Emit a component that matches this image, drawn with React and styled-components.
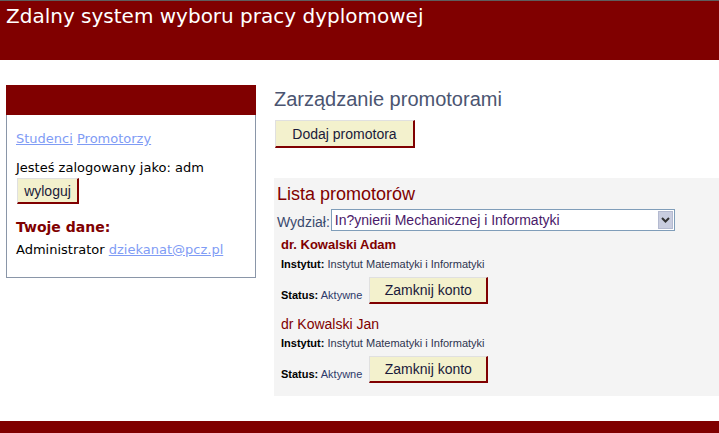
import React from "react";
import styled, { createGlobalStyle } from "styled-components";

const GlobalStyle = createGlobalStyle`
  body {
    margin: 0;
    background: #ffffff;
    font-family: "DejaVu Sans", Verdana, sans-serif;
  }
`;

const promotors = [
  { id: 1, name: "dr. Kowalski Adam", bold: true, institute: "Instytut Matematyki i Informatyki", status: "Aktywne" },
  { id: 2, name: "dr Kowalski Jan", bold: false, institute: "Instytut Matematyki i Informatyki", status: "Aktywne" },
];

const App = () => {
  return (
    <Page>
      <GlobalStyle />
      <Header>
        <SiteTitle>Zdalny system wyboru pracy dyplomowej</SiteTitle>
      </Header>
      <Content>
        <Sidebar>
          <SidebarBar />
          <SidebarBody>
            <NavLinks>
              <Link href="#">Studenci</Link> <Link href="#">Promotorzy</Link>
            </NavLinks>
            <LoggedAs>Jesteś zalogowany jako: adm</LoggedAs>
            <Button $small>wyloguj</Button>
            <DataTitle>Twoje dane:</DataTitle>
            <Admin>
              Administrator <Link href="#">dziekanat@pcz.pl</Link>
            </Admin>
          </SidebarBody>
        </Sidebar>
        <Main>
          <PageTitle>Zarządzanie promotorami</PageTitle>
          <Button $wide>Dodaj promotora</Button>
          <Panel>
            <ListTitle>Lista promotorów</ListTitle>
            <FilterRow>
              <FilterLabel>Wydział:</FilterLabel>
              <SelectBox>
                <SelectText>In?ynierii Mechanicznej i Informatyki</SelectText>
                <SelectArrow>
                  <svg width="9" height="6" viewBox="0 0 9 6">
                    <path d="M1 1 L4.5 4.5 L8 1" stroke="#333" strokeWidth="2" fill="none" />
                  </svg>
                </SelectArrow>
              </SelectBox>
            </FilterRow>
            {promotors.map((p) => (
              <Promotor key={p.id}>
                <PromotorName $bold={p.bold}>{p.name}</PromotorName>
                <InfoLine>
                  <b>Instytut:</b> {p.institute}
                </InfoLine>
                <StatusRow>
                  <InfoLine>
                    <b>Status:</b> <StatusValue>{p.status}</StatusValue>
                  </InfoLine>
                  <Button $medium>Zamknij konto</Button>
                </StatusRow>
              </Promotor>
            ))}
          </Panel>
        </Main>
      </Content>
      <Footer />
    </Page>
  );
};

const Page = styled.div`
  width: 100%;
`;
const Header = styled.div`
  height: 60px;
  background: #800000;
  border-top: 1px solid #5e5e5e;
  padding: 3px 0 0 6px;
  box-sizing: border-box;
`;
const SiteTitle = styled.h1`
  margin: 0;
  font-family: "DejaVu Sans", Verdana, sans-serif;
  font-weight: normal;
  font-size: 20px;
  color: #ffffff;
  line-height: 24px;
`;
const Content = styled.div`
  display: flex;
  align-items: flex-start;
  gap: 18px;
  padding: 25px 0 0 6px;
`;
const Sidebar = styled.div`
  width: 250px;
  box-sizing: border-box;
  border: 1px solid #8a96a8;
  border-top: none;
  background: #fff;
  flex-shrink: 0;
`;
const SidebarBar = styled.div`
  height: 30px;
  margin: 0 -1px;
  background: #800000;
`;
const SidebarBody = styled.div`
  padding: 16px 9px 19px 9px;
  font-size: 13px;
  color: #000;
`;
const NavLinks = styled.div`
  line-height: 16px;
`;
const Link = styled.a`
  color: #7f9cf5;
  text-decoration: underline;
`;
const LoggedAs = styled.div`
  margin-top: 13px;
  line-height: 16px;
`;
const DataTitle = styled.div`
  margin-top: 14px;
  font-size: 14px;
  font-weight: bold;
  color: #800000;
  line-height: 18px;
`;
const Admin = styled.div`
  margin-top: 6px;
  line-height: 16px;
`;
const Button = styled.button`
  display: block;
  box-sizing: border-box;
  background: #f3f1cd;
  border: 2px solid;
  border-color: #e0e0e0 #800000 #800000 #e0e0e0;
  border-width: 1px 2px 2px 1px;
  color: #1a1a3a;
  font-family: "Liberation Sans", Arial, sans-serif;
  font-size: 14px;
  padding: 0;
  margin: 0;
  width: ${(p) => (p.$wide ? "140px" : p.$medium ? "119px" : "62px")};
  height: ${(p) => (p.$small ? "26px" : p.$medium ? "27px" : "28px")};
  margin-left: 1px;
  margin-top: ${(p) => (p.$small ? "2px" : "0")};
`;
const Main = styled.div`
  flex: 1;
  min-width: 0;
`;
const PageTitle = styled.h2`
  margin: 3px 0 9px;
  font-family: "Liberation Sans", Arial, sans-serif;
  font-weight: normal;
  font-size: 20px;
  line-height: 23px;
  color: #4b5571;
`;
const Panel = styled.div`
  margin-top: 30px;
  background: #f4f4f4;
  padding: 6px 0 13px 3px;
  font-family: "Liberation Sans", Arial, sans-serif;
`;
const ListTitle = styled.div`
  font-size: 18px;
  line-height: 20px;
  color: #800000;
`;
const FilterRow = styled.div`
  display: flex;
  align-items: center;
  margin-top: 5px;
`;
const FilterLabel = styled.span`
  font-size: 14px;
  color: #3a4a6e;
  margin-right: 1px;
  margin-top: 4px;
`;
const SelectBox = styled.div`
  width: 344px;
  height: 22px;
  box-sizing: border-box;
  border: 1px solid #7f9db9;
  background: #fff;
  display: flex;
  align-items: center;
`;
const SelectText = styled.span`
  flex: 1;
  padding-left: 3px;
  font-size: 14px;
  color: #4a1a6a;
`;
const SelectArrow = styled.span`
  width: 15px;
  height: 18px;
  margin-right: 1px;
  background: #c9cddf;
  border: 1px solid #b4bad0;
  box-sizing: border-box;
  display: flex;
  align-items: center;
  justify-content: center;
`;
const Promotor = styled.div`
  padding-left: 4px;
  margin-top: 6px;
  & + & {
    margin-top: 12px;
  }
`;
const PromotorName = styled.div`
  font-size: ${(p) => (p.$bold ? "13px" : "14px")};
  font-weight: ${(p) => (p.$bold ? "bold" : "normal")};
  line-height: 16px;
  color: #800000;
  & + div {
    margin-top: 4px;
  }
`;
const InfoLine = styled.div`
  font-size: 11px;
  line-height: 14px;
  color: #2e3550;
  b {
    color: #000;
  }
`;
const StatusValue = styled.span`
  color: #2e3a6a;
`;
const StatusRow = styled.div`
  display: flex;
  align-items: flex-end;
  gap: 6px;
  margin-top: 6px;
  ${InfoLine} {
    margin-bottom: 2px;
  }
`;
const Footer = styled.div`
  margin-top: 25px;
  height: 20px;
  background: #800000;
`;

export default App;
